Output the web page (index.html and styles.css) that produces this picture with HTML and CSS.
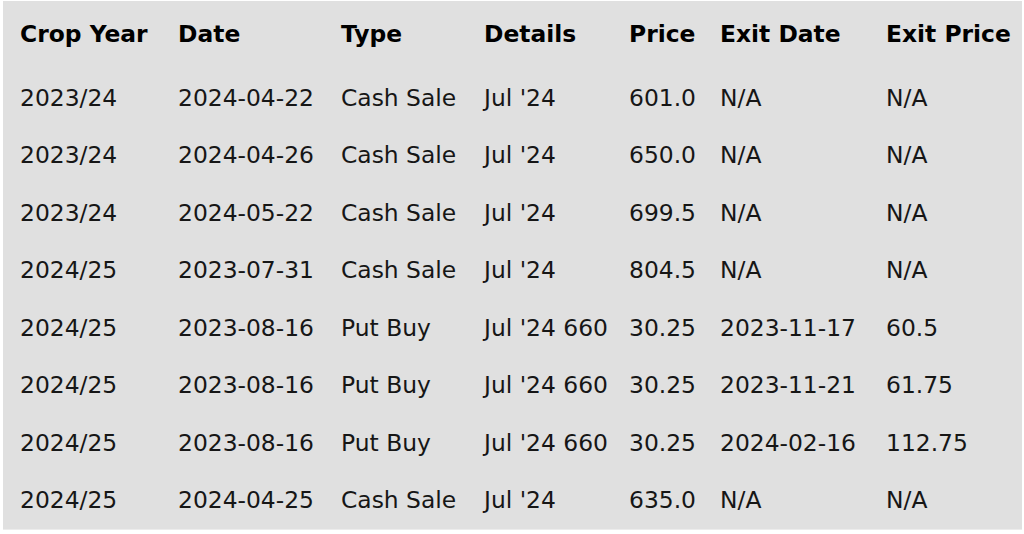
FILE: index.html
```html
<!DOCTYPE html>
<html>
<head>
<meta charset="utf-8">
<link rel="stylesheet" href="styles.css">
</head>
<body>
<div class="panel">
<table class="trades">
<colgroup>
<col class="c-year"><col class="c-date"><col class="c-type"><col class="c-details"><col class="c-price"><col class="c-exitdate"><col class="c-exitprice">
</colgroup>
<thead>
<tr><th>Crop Year</th><th>Date</th><th>Type</th><th>Details</th><th>Price</th><th>Exit Date</th><th>Exit Price</th></tr>
</thead>
<tbody>
<tr><td>2023/24</td><td>2024-04-22</td><td>Cash Sale</td><td>Jul '24</td><td>601.0</td><td>N/A</td><td>N/A</td></tr>
<tr><td>2023/24</td><td>2024-04-26</td><td>Cash Sale</td><td>Jul '24</td><td>650.0</td><td>N/A</td><td>N/A</td></tr>
<tr><td>2023/24</td><td>2024-05-22</td><td>Cash Sale</td><td>Jul '24</td><td>699.5</td><td>N/A</td><td>N/A</td></tr>
<tr><td>2024/25</td><td>2023-07-31</td><td>Cash Sale</td><td>Jul '24</td><td>804.5</td><td>N/A</td><td>N/A</td></tr>
<tr><td>2024/25</td><td>2023-08-16</td><td>Put Buy</td><td>Jul '24 660</td><td>30.25</td><td>2023-11-17</td><td>60.5</td></tr>
<tr><td>2024/25</td><td>2023-08-16</td><td>Put Buy</td><td>Jul '24 660</td><td>30.25</td><td>2023-11-21</td><td>61.75</td></tr>
<tr><td>2024/25</td><td>2023-08-16</td><td>Put Buy</td><td>Jul '24 660</td><td>30.25</td><td>2024-02-16</td><td>112.75</td></tr>
<tr><td>2024/25</td><td>2024-04-25</td><td>Cash Sale</td><td>Jul '24</td><td>635.0</td><td>N/A</td><td>N/A</td></tr>
</tbody>
</table>
</div>
</body>
</html>
```

FILE: styles.css
```css
html, body {
  margin: 0;
  padding: 0;
  background: #ffffff;
}
body {
  font-family: "DejaVu Sans", sans-serif;
  font-size: 23.4px;
  color: #161616;
}
.panel {
  margin: 1px 2px 0 3px;
  height: 529px;
  background: #e0e0e0;
  border-bottom: 1px solid #ececec;
  box-sizing: border-box;
  padding-left: 17px;
}
.trades {
  border-collapse: collapse;
  table-layout: fixed;
  width: 1002px;
}
.c-year { width: 158px; }
.c-date { width: 163px; }
.c-type { width: 143px; }
.c-details { width: 145px; }
.c-price { width: 91px; }
.c-exitdate { width: 166px; }
.trades th, .trades td {
  padding: 0;
  text-align: left;
  white-space: nowrap;
  line-height: 27px;
  vertical-align: top;
}
.trades thead tr {
  height: 68.35px;
}
.trades th {
  font-weight: bold;
  color: #000;
  padding-top: 20px;
  height: 68.35px;
  box-sizing: border-box;
}
.trades td {
  padding-top: 15.25px;
  padding-bottom: 15.25px;
}
```
